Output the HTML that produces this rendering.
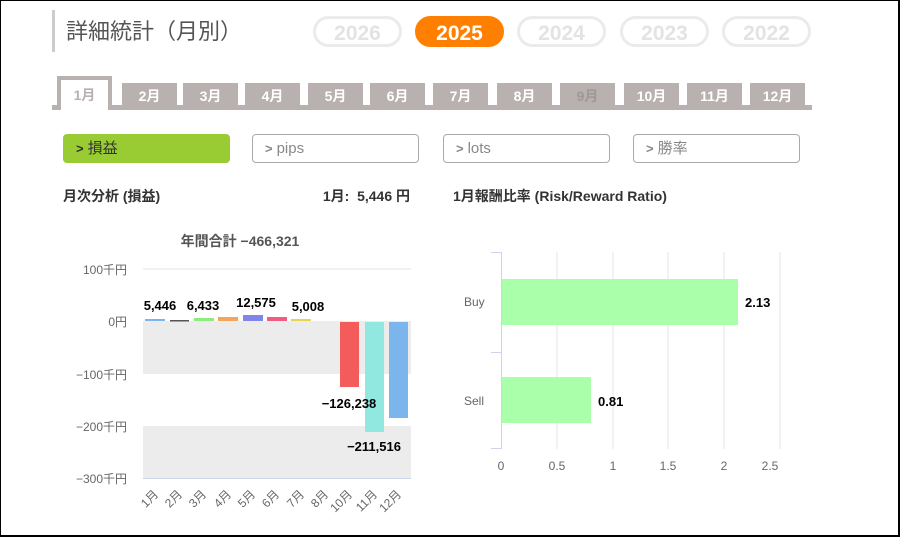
<!DOCTYPE html>
<html><head><meta charset="utf-8"><style>
*{margin:0;padding:0;box-sizing:border-box}
body{width:900px;height:537px;background:#fff;position:relative;overflow:hidden;font-family:"Liberation Sans","Noto Sans CJK JP",sans-serif}
.frame{position:absolute;left:0;top:0;width:900px;height:537px;border-top:1px solid #000;border-left:1px solid #000;border-right:2px solid #000;border-bottom:2px solid #000}
.a{position:absolute}
.bar{left:52px;top:10px;width:3px;height:42px;background:#ccc}
.title{left:66px;top:17px;font-size:22px;color:#555;line-height:30px}
.yr{position:absolute;top:16px;height:31px;width:89px;border:3px solid #ebebeb;border-radius:16px;color:#e3e3e3;font-weight:bold;font-size:21px;text-align:center;line-height:29px}
.yr.on{background:#ff8000;border-color:#ff8000;color:#fff}
.strip{left:52px;top:105px;width:760px;height:5px;background:#b9b0b0}
.tab{position:absolute;top:83px;width:55px;height:23px;background:#b9b0b0;color:#fff;font-weight:bold;font-size:14px;text-align:center;line-height:26px}
.act{left:57px;top:76px;width:55px;height:34px;background:#b9b0b0;padding:4px 4px 0 4px}
.act div{background:#fff;height:30px;color:#b9b0b0;font-weight:bold;font-size:14px;text-align:center;line-height:30px}
.btn{position:absolute;top:134px;width:167px;height:29px;border:1px solid #aaa;border-radius:4px;font-size:15px;color:#888;line-height:27px;padding-left:12px}
.btn b{font-size:13px;color:#888;margin-right:4px}
.btn.g{background:#99cc33;border-color:#99cc33;color:#333}
.btn.g b{color:#333}
.h{top:186px;font-size:14px;font-weight:bold;color:#333}
</style></head><body>
<div class="a bar"></div>
<div class="a title">詳細統計（月別）</div>
<div class="yr" style="left:313px">2026</div>
<div class="yr on" style="left:415px">2025</div>
<div class="yr" style="left:517px">2024</div>
<div class="yr" style="left:620px">2023</div>
<div class="yr" style="left:722px">2022</div>
<div class="a strip"></div>
<div class="a act"><div>1月</div></div>
<div class="tab" style="left:122px">2月</div>
<div class="tab" style="left:183px">3月</div>
<div class="tab" style="left:245px">4月</div>
<div class="tab" style="left:308px">5月</div>
<div class="tab" style="left:370px">6月</div>
<div class="tab" style="left:433px">7月</div>
<div class="tab" style="left:497px">8月</div>
<div class="tab" style="left:560px;color:#a09898">9月</div>
<div class="tab" style="left:624px">10月</div>
<div class="tab" style="left:687px">11月</div>
<div class="tab" style="left:750px">12月</div>
<div class="btn g" style="left:63px"><b>&gt;</b>損益</div>
<div class="btn" style="left:252px"><b>&gt;</b>pips</div>
<div class="btn" style="left:443px"><b>&gt;</b>lots</div>
<div class="btn" style="left:633px"><b>&gt;</b>勝率</div>
<div class="a h" style="left:63px">月次分析 (損益)</div>
<div class="a h" style="right:490px">1月:&nbsp; 5,446 円</div>
<div class="a h" style="left:453px">1月報酬比率 (Risk/Reward Ratio)</div>
<svg class="a" style="left:0;top:0" width="900" height="537" font-family="Liberation Sans, Noto Sans CJK JP, sans-serif">
<text x="240" y="246" font-size="14" font-weight="bold" fill="#555" text-anchor="middle">年間合計 −466,321</text>
<rect x="143" y="321" width="268" height="53" fill="#ececec"/>
<rect x="143" y="426" width="268" height="52" fill="#ececec"/>
<line x1="143" y1="269" x2="411" y2="269" stroke="#e6e6e6"/>
<line x1="143" y1="478.5" x2="411" y2="478.5" stroke="#ccd6eb"/>
<g font-size="12" fill="#666" text-anchor="end">
<text x="127" y="274">100千円</text><text x="127" y="326">0円</text><text x="127" y="379">−100千円</text><text x="127" y="431">−200千円</text><text x="127" y="483">−300千円</text></g>
<rect x="145" y="319" width="20" height="2" fill="#7cb5ec"/>
<rect x="170" y="320" width="19" height="1.5" fill="#555"/>
<rect x="194" y="318" width="20" height="3" fill="#90ed7d"/>
<rect x="218" y="317" width="20" height="4" fill="#f7a35c"/>
<rect x="243" y="315" width="20" height="6" fill="#8085e9"/>
<rect x="267" y="317" width="20" height="4" fill="#f15c80"/>
<rect x="291" y="319" width="20" height="2" fill="#e4d354"/>
<rect x="340" y="322" width="19" height="65" fill="#f45b5b"/>
<rect x="365" y="322" width="19" height="110" fill="#91e8e1"/>
<rect x="389" y="322" width="19" height="96" fill="#7cb5ec"/>
<g font-size="13" font-weight="bold" fill="#000" text-anchor="middle">
<text x="160" y="310">5,446</text><text x="203" y="310">6,433</text><text x="256" y="307">12,575</text><text x="308" y="311">5,008</text>
<text x="349" y="408">−126,238</text><text x="374" y="451">−211,516</text></g>
<g font-size="12" fill="#666" text-anchor="end">
<text transform="translate(159,495) rotate(-45)">1月</text>
<text transform="translate(183,495) rotate(-45)">2月</text>
<text transform="translate(207,495) rotate(-45)">3月</text>
<text transform="translate(232,495) rotate(-45)">4月</text>
<text transform="translate(256,495) rotate(-45)">5月</text>
<text transform="translate(280,495) rotate(-45)">6月</text>
<text transform="translate(305,495) rotate(-45)">7月</text>
<text transform="translate(329,495) rotate(-45)">8月</text>
<text transform="translate(353,495) rotate(-45)">10月</text>
<text transform="translate(378,495) rotate(-45)">11月</text>
<text transform="translate(402,495) rotate(-45)">12月</text></g>
<g stroke="#e6e6e6"><line x1="557" y1="252" x2="557" y2="449"/><line x1="613" y1="252" x2="613" y2="449"/><line x1="668" y1="252" x2="668" y2="449"/><line x1="724" y1="252" x2="724" y2="449"/><line x1="780" y1="252" x2="780" y2="449"/></g>
<g stroke="#ccd6eb"><line x1="501.5" y1="252" x2="501.5" y2="449"/><line x1="491" y1="252.5" x2="501" y2="252.5"/><line x1="491" y1="352.5" x2="501" y2="352.5"/><line x1="491" y1="448.5" x2="501" y2="448.5"/></g>
<rect x="502" y="279" width="236" height="46" fill="#aaffaa"/>
<rect x="502" y="377" width="89" height="46" fill="#aaffaa"/>
<g font-size="12" fill="#666"><text x="464" y="306">Buy</text><text x="464" y="405">Sell</text></g>
<g font-size="13" font-weight="bold" fill="#000"><text x="745" y="307">2.13</text><text x="598" y="406">0.81</text></g>
<g font-size="12" fill="#666" text-anchor="middle"><text x="501" y="470">0</text><text x="557" y="470">0.5</text><text x="613" y="470">1</text><text x="668" y="470">1.5</text><text x="724" y="470">2</text><text x="770" y="470">2.5</text></g>
</svg>
<div class="frame"></div>
</body></html>
